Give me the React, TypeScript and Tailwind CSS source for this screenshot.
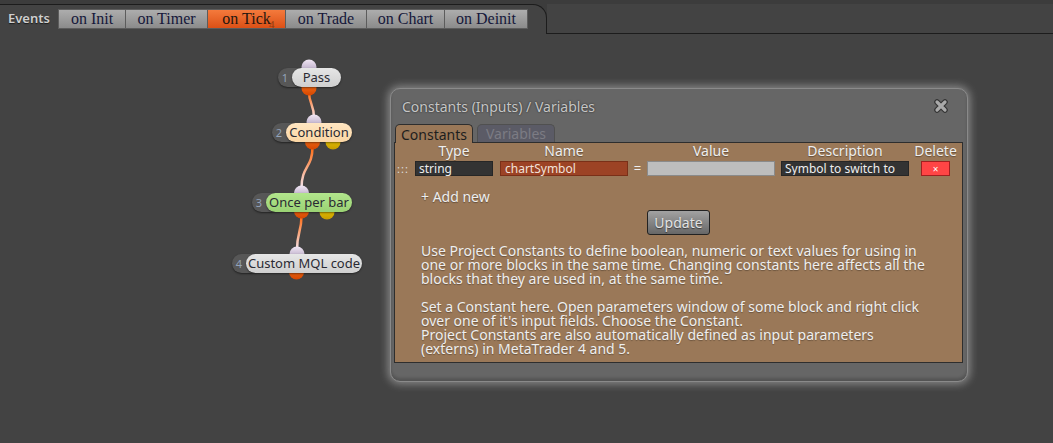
import React from "react";

const tabs = [
  { label: "on Init", w: 68 },
  { label: "on Timer", w: 83 },
  { label: "on Tick", w: 79, active: true },
  { label: "on Trade", w: 82 },
  { label: "on Chart", w: 79 },
  { label: "on Deinit", w: 84 },
];

type NodeProps = {
  num: number;
  label: string;
  numLeft: number;
  left: number;
  width: number;
  top: number;
  bg: string;
};

function FlowNode({ num, label, numLeft, left, width, top, bg }: NodeProps) {
  return (
    <>
      <div
        className="absolute h-[19px] rounded-full bg-[#575757] shadow-[0_1px_2px_rgba(0,0,0,0.5)] flex items-center"
        style={{ left: numLeft, top, width: left - numLeft + 14 }}
      >
        <span className="w-[14px] text-center text-[11px] leading-none text-[#93a3ba]">{num}</span>
      </div>
      <div
        className={`absolute h-[19px] rounded-full flex items-center justify-center text-[13px] leading-none text-[#2a2a33] shadow-[0_1px_2px_rgba(0,0,0,0.45)] ${bg}`}
        style={{ left, top, width }}
      >
        {label}
      </div>
    </>
  );
}

export default function App() {
  const sans = "font-['Noto_Sans','Open_Sans',sans-serif]";
  return (
    <div className={`relative w-[1053px] h-[443px] overflow-hidden bg-[#434343] ${sans}`}>
      {/* top tab strip */}
      <div className="flex h-[34px] bg-[#3c3c3c]">
        <div className="w-[547px] mt-[4px] border-t border-r border-[#1c1c1c] rounded-tr-[14px] bg-[#434343] flex items-start pt-[4px] pl-[8px]">
          <span className="w-[50px] h-[20px] flex items-center text-[13px] font-semibold text-[#cfcfcf] [text-shadow:0_1px_1px_rgba(0,0,0,0.6)]">
            Events
          </span>
          <div className="flex">
            {tabs.map((t) => (
              <div
                key={t.label}
                className={`relative h-[20px] flex items-center justify-center border border-[#5c5c5c] -ml-px first:ml-0 font-['Liberation_Serif',serif] text-[16px] leading-none ${
                  t.active
                    ? "bg-[linear-gradient(#f47a3c,#dc5016)] text-[#26160f]"
                    : "bg-[linear-gradient(#adadad,#8b8b8b)] text-[#15173a]"
                }`}
                style={{ width: t.w }}
              >
                {t.label}
                {t.active && (
                  <span className="absolute left-[61px] top-[9px] text-[11px] leading-none text-[#8e3a10]">4</span>
                )}
              </div>
            ))}
          </div>
        </div>
        <div className="flex-1 border-b border-[#1c1c1c] bg-[#434343] mt-[4px]"></div>
      </div>

      {/* connectors */}
      <svg className="absolute left-0 top-0" width="1053" height="443">
        <defs>
          <linearGradient id="lav" x1="0" y1="0" x2="0" y2="1">
            <stop offset="0" stopColor="#f1e6f4" />
            <stop offset="1" stopColor="#a494b4" />
          </linearGradient>
          <linearGradient id="org" x1="0" y1="0" x2="0" y2="1">
            <stop offset="0" stopColor="#ff7c22" />
            <stop offset="1" stopColor="#d44600" />
          </linearGradient>
          <linearGradient id="yel" x1="0" y1="0" x2="0" y2="1">
            <stop offset="0" stopColor="#f7d400" />
            <stop offset="1" stopColor="#c69c00" />
          </linearGradient>
          <linearGradient id="ln1" gradientUnits="userSpaceOnUse" x1="0" y1="92" x2="0" y2="118">
            <stop offset="0" stopColor="#ff6a10" />
            <stop offset="1" stopColor="#f4e4ec" />
          </linearGradient>
          <linearGradient id="ln2" gradientUnits="userSpaceOnUse" x1="0" y1="147" x2="0" y2="188">
            <stop offset="0" stopColor="#ff6a10" />
            <stop offset="1" stopColor="#f4e4ec" />
          </linearGradient>
          <linearGradient id="ln3" gradientUnits="userSpaceOnUse" x1="0" y1="216" x2="0" y2="250">
            <stop offset="0" stopColor="#ff6a10" />
            <stop offset="1" stopColor="#f4e4ec" />
          </linearGradient>
        </defs>
        <path d="M309 92 C309 104 314 104 314 118" stroke="url(#ln1)" strokeWidth="2.5" fill="none" />
        <path d="M312.5 147 C312.5 168 301.5 166 301.5 188" stroke="url(#ln2)" strokeWidth="2.5" fill="none" />
        <path d="M301.5 216 C301.5 232 297 232 297 250" stroke="url(#ln3)" strokeWidth="2.5" fill="none" />

        <circle cx="309" cy="67" r="7.5" fill="url(#lav)" />
        <circle cx="309" cy="88" r="7.5" fill="url(#org)" />

        <circle cx="314" cy="122" r="7.5" fill="url(#lav)" />
        <circle cx="312.5" cy="142" r="7.5" fill="url(#org)" />
        <circle cx="333" cy="142" r="7.5" fill="url(#yel)" />

        <circle cx="301.5" cy="193" r="7.5" fill="url(#lav)" />
        <circle cx="301.5" cy="211" r="7.5" fill="url(#org)" />
        <circle cx="327" cy="212" r="7.5" fill="url(#yel)" />

        <circle cx="297" cy="254" r="7.5" fill="url(#lav)" />
        <circle cx="296.5" cy="272" r="7.5" fill="url(#org)" />
      </svg>

      <FlowNode num={1} label="Pass" numLeft={278} left={292} width={49} top={68} bg="bg-[linear-gradient(#e6e6e6,#cfcfcf)]" />
      <FlowNode num={2} label="Condition" numLeft={272} left={286} width={66} top={123} bg="bg-[linear-gradient(#ffe6c2,#fbd6a4)]" />
      <FlowNode num={3} label="Once per bar" numLeft={252} left={266} width={86} top={193} bg="bg-[linear-gradient(#b2e68c,#9ad274)]" />
      <FlowNode num={4} label="Custom MQL code" numLeft={232} left={246} width={116} top={254} bg="bg-[linear-gradient(#e6e6e6,#cfcfcf)]" />

      {/* dialog */}
      <div className="absolute left-[390px] top-[88px] w-[578px] h-[294px] rounded-[10px] bg-[#666666] border border-[#8a8a8a] shadow-[0_0_8px_2px_rgba(225,225,225,0.45),inset_0_-3px_3px_rgba(0,0,0,0.18)] flex flex-col pl-[3px] pr-[4px]">
        <div className="h-[34px] flex items-center justify-between pl-[8px] pr-[14px]">
          <span className="text-[14px] text-[#c6c6c6] [text-shadow:0_0_2px_rgba(0,0,0,0.7)]">
            Constants (Inputs) / Variables
          </span>
          <svg width="16" height="16" viewBox="0 0 16 16">
            <path d="M4 4 L12 12 M12 4 L4 12" stroke="#333333" strokeWidth="5.5" strokeLinecap="round" />
            <path d="M4 4 L12 12 M12 4 L4 12" stroke="#a9a9a9" strokeWidth="3.2" strokeLinecap="round" />
          </svg>
        </div>
        <div className="mt-[1px] flex h-[18px] pl-[1px] gap-[4px]">
          <div className="w-[78px] h-[19px] rounded-t-[5px] border border-b-0 border-[#2e2e2e] bg-[#9a7858] flex items-center justify-center text-[14px] text-[#1e1e1e] relative z-10">
            Constants
          </div>
          <div className="w-[78px] h-[18px] rounded-t-[5px] border border-b-0 border-[#505050] bg-[#5b5b66] flex items-center justify-center text-[14px] text-[#7c7c84]">
            Variables
          </div>
        </div>
        <div className="h-[221px] border border-[#2e2e2e] bg-[#9a7858] flex flex-col text-[#eeeeee]">
          {/* header */}
          <div className="flex h-[16px] text-[14px] leading-[16px] [text-shadow:0_1px_1px_rgba(0,0,0,0.35)]">
            <div className="w-[20px]"></div>
            <div className="w-[78px] flex justify-center">Type</div>
            <div className="w-[7px]"></div>
            <div className="w-[128px] flex justify-center">Name</div>
            <div className="w-[19px]"></div>
            <div className="w-[128px] flex justify-center">Value</div>
            <div className="w-[6px]"></div>
            <div className="w-[128px] flex justify-center">Description</div>
            <div className="w-[12px]"></div>
            <div className="w-[29px] flex justify-center whitespace-nowrap">Delete</div>
          </div>
          {/* row */}
          <div className="flex h-[15px] mt-[2px] text-[12px] leading-none">
            <div className="w-[20px] flex items-center pl-[2px] text-[11px] text-[#ddd] tracking-[1px]">:::</div>
            <div className="w-[78px] h-[15px] bg-[#333333] border border-[#262626] flex items-center pl-[3px] text-[#eeeeee]">string</div>
            <div className="w-[7px]"></div>
            <div className="w-[128px] h-[15px] bg-[#9c4325] border border-[#7a3018] flex items-center pl-[4px] text-[#f2e2da]">chartSymbol</div>
            <div className="w-[19px] flex items-center justify-center text-[13px] text-[#eeeeee]">=</div>
            <div className="w-[128px] h-[15px] bg-[#bdbdbd] border border-[#8a8a8a]"></div>
            <div className="w-[6px]"></div>
            <div className="w-[128px] h-[15px] bg-[#333333] border border-[#262626] flex items-center pl-[3px] text-[#eeeeee] whitespace-nowrap overflow-hidden">Symbol to switch to</div>
            <div className="w-[12px]"></div>
            <div className="w-[29px] h-[15px] bg-[#ff4545] border border-[#a02020] flex items-center justify-center text-[10px] text-white">×</div>
          </div>
          <div className="mt-[13px] pl-[26px] text-[14px] leading-[16px] text-[#eeeeee] [text-shadow:0_1px_1px_rgba(0,0,0,0.35)]">
            + Add new
          </div>
          <div className="mt-[5px] flex justify-center">
            <div className="w-[63px] h-[25px] rounded-[3px] border border-[#222] bg-[linear-gradient(#a2a2a2,#676767)] flex items-center justify-center text-[14px] text-[#e2e2e2] [text-shadow:0_1px_1px_rgba(0,0,0,0.5)]">
              Update
            </div>
          </div>
          <div className="mt-[9px] pl-[26px] text-[14px] leading-[14px] text-[#efefef] [text-shadow:0_1px_1px_rgba(0,0,0,0.3)]">
            <p>Use Project Constants to define boolean, numeric or text values for using in</p>
            <p>one or more blocks in the same time. Changing constants here affects all the</p>
            <p>blocks that they are used in, at the same time.</p>
            <p className="h-[14px]"></p>
            <p>Set a Constant here. Open parameters window of some block and right click</p>
            <p>over one of it's input fields. Choose the Constant.</p>
            <p>Project Constants are also automatically defined as input parameters</p>
            <p>(externs) in MetaTrader 4 and 5.</p>
          </div>
        </div>
      </div>
    </div>
  );
}
